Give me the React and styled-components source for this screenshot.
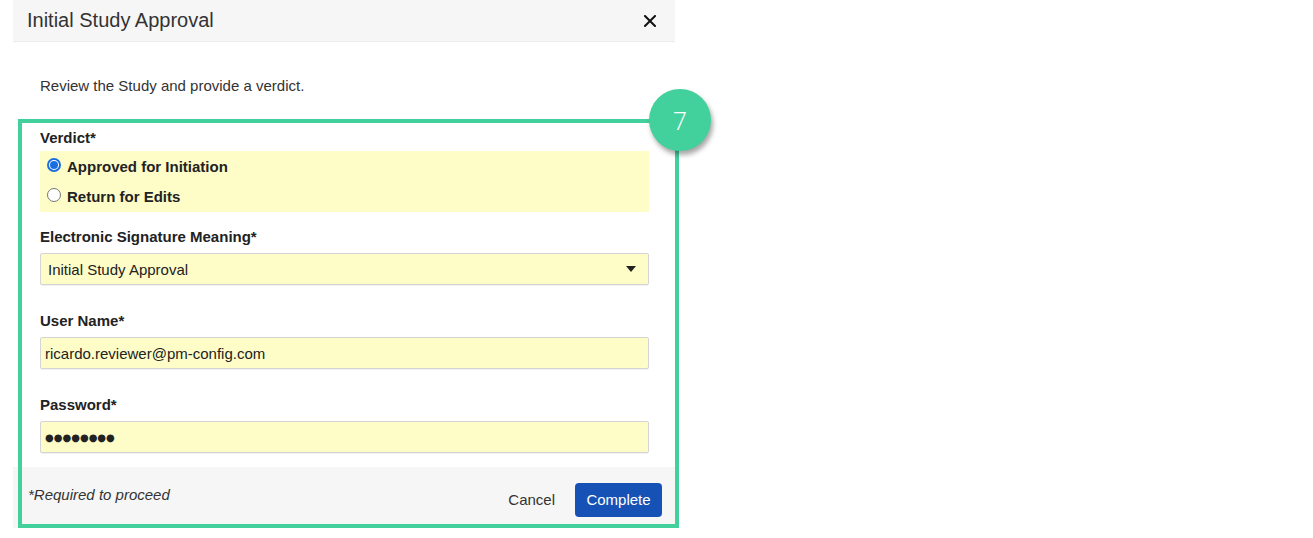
import React from "react";
import styled, { createGlobalStyle } from "styled-components";

const Global = createGlobalStyle`
  html, body { margin: 0; padding: 0; background: #ffffff; }
  body { font-family: "Liberation Sans", Arial, sans-serif; color: #333; }
  * { box-sizing: border-box; }
`;

const Page = styled.div`
  position: relative;
  width: 1313px;
  height: 538px;
  overflow: hidden;
  padding-left: 13px;
`;

const Dialog = styled.div`
  width: 662px;
  display: flex;
  flex-direction: column;
`;

const Header = styled.div`
  height: 42px;
  background: #f6f6f6;
  border-bottom: 1px solid #ececec;
  display: flex;
  align-items: center;
  justify-content: space-between;
  padding: 0 19px 0 14px;
`;

const Title = styled.div`
  font-size: 20px;
  color: #333;
`;

const CloseBtn = styled.button`
  border: 0;
  background: transparent;
  padding: 0;
  width: 13px;
  height: 13px;
  display: flex;
  align-items: center;
  justify-content: center;
  cursor: pointer;
`;

const Body = styled.div`
  padding: 34px 26px 14px 27px;
  display: flex;
  flex-direction: column;
`;

const Intro = styled.p`
  margin: 0 0 32px 0;
  font-size: 15px;
  line-height: 20px;
  color: #333;
`;

const Label = styled.div`
  font-size: 15px;
  font-weight: bold;
  line-height: 20px;
  color: #222;
  margin-bottom: ${(p) => p.$gap}px;
`;

const Field = styled.div`
  margin-bottom: ${(p) => p.$after}px;
`;

const RadioBox = styled.div`
  background: #fefdc8;
  height: 61px;
  display: flex;
  flex-direction: column;
`;

const RadioRow = styled.label`
  height: 30.5px;
  display: flex;
  align-items: center;
  padding-left: 7px;
  gap: 6px;
  font-size: 15px;
  font-weight: bold;
  color: #222;
  cursor: pointer;
`;

const RadioDot = styled.span`
  width: 14px;
  height: 14px;
  border-radius: 50%;
  border: ${(p) => (p.$checked ? "2px solid #1a6ee0" : "1px solid #767676")};
  background: #fff;
  display: flex;
  align-items: center;
  justify-content: center;
  margin-top: -3px;
  &::after {
    content: "";
    width: 8px;
    height: 8px;
    border-radius: 50%;
    background: ${(p) => (p.$checked ? "#1a6ee0" : "transparent")};
  }
`;

const InputBox = styled.div`
  height: 32px;
  background: #fefdc8;
  border: 1px solid #d4d4d4;
  border-radius: 2px;
  box-shadow: 0 1px 1px rgba(0, 0, 0, 0.06);
  display: flex;
  align-items: center;
  justify-content: space-between;
  padding: 0 12px 0 ${(p) => p.$padLeft}px;
  font-size: 15px;
  color: #222;
`;

const Dots = styled.span`
  font-size: 10px;
  letter-spacing: 0px;
  font-family: "DejaVu Sans", sans-serif;
  padding-top: 1px;
`;

const Caret = styled.span`
  width: 0;
  height: 0;
  border-left: 5px solid transparent;
  border-right: 5px solid transparent;
  border-top: 6px solid #222;
`;

const Footer = styled.div`
  height: 61px;
  background: #f6f6f6;
  display: flex;
  align-items: center;
  justify-content: space-between;
  padding: 0 13px 0 15px;
`;

const Required = styled.div`
  font-size: 15px;
  font-style: italic;
  color: #333;
  margin-bottom: 6px;
`;

const Actions = styled.div`
  display: flex;
  align-items: center;
  gap: 20px;
  margin-bottom: -4px;
`;

const TextButton = styled.button`
  border: 0;
  background: transparent;
  font-family: inherit;
  font-size: 15px;
  color: #333;
  padding: 0;
`;

const PrimaryButton = styled.button`
  border: 0;
  background: #1652b5;
  color: #fff;
  font-family: inherit;
  font-size: 15px;
  height: 34px;
  width: 87px;
  border-radius: 4px;
`;

const Highlight = styled.div`
  position: absolute;
  left: 18px;
  top: 119px;
  width: 661px;
  height: 409px;
  border: 4px solid #42d09d;
  pointer-events: none;
`;

const Badge = styled.div`
  position: absolute;
  left: 649px;
  top: 89px;
  width: 62px;
  height: 62px;
  border-radius: 50%;
  background: #42d09d;
  box-shadow: 2px 4px 5px rgba(0, 0, 0, 0.35);
  display: flex;
  align-items: center;
  justify-content: center;
  color: #fff;
  font-family: "Open Sans", sans-serif;
  font-size: 25px;
  font-weight: 300;
`;

export default function App() {
  return (
    <Page>
      <Global />
      <Dialog>
        <Header>
          <Title>Initial Study Approval</Title>
          <CloseBtn aria-label="Close">
            <svg width="12" height="12" viewBox="0 0 12 12">
              <path d="M1 1 L11 11 M11 1 L1 11" stroke="#111" strokeWidth="2" strokeLinecap="square" />
            </svg>
          </CloseBtn>
        </Header>
        <Body>
          <Intro>Review the Study and provide a verdict.</Intro>
          <Field $after={15}>
            <Label $gap={3}>Verdict*</Label>
            <RadioBox>
              <RadioRow>
                <RadioDot $checked />
                Approved for Initiation
              </RadioRow>
              <RadioRow>
                <RadioDot />
                Return for Edits
              </RadioRow>
            </RadioBox>
          </Field>
          <Field $after={26}>
            <Label $gap={6}>Electronic Signature Meaning*</Label>
            <InputBox $padLeft={7}>
              <span>Initial Study Approval</span>
              <Caret />
            </InputBox>
          </Field>
          <Field $after={26}>
            <Label $gap={6}>User Name*</Label>
            <InputBox $padLeft={4}>ricardo.reviewer@pm-config.com</InputBox>
          </Field>
          <Field $after={0}>
            <Label $gap={6}>Password*</Label>
            <InputBox $padLeft={4}>
              <Dots>●●●●●●●●</Dots>
            </InputBox>
          </Field>
        </Body>
        <Footer>
          <Required>*Required to proceed</Required>
          <Actions>
            <TextButton>Cancel</TextButton>
            <PrimaryButton>Complete</PrimaryButton>
          </Actions>
        </Footer>
      </Dialog>
      <Highlight />
      <Badge>7</Badge>
    </Page>
  );
}
